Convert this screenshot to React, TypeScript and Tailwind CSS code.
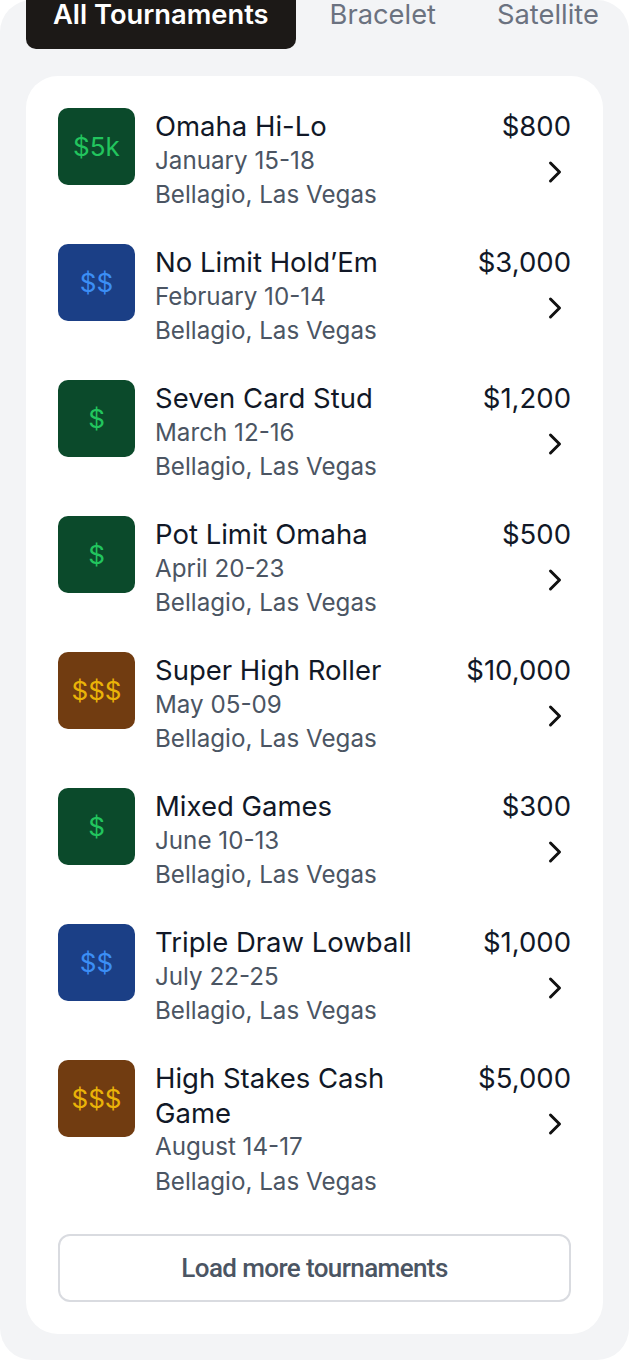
import { ChevronRight } from 'lucide-react'

type Tier = 'green' | 'blue' | 'gold'

interface Tournament {
  badge: string
  tier: Tier
  name: string
  dates: string
  venue: string
  buyIn: string
}

// ─── Data ─────────────────────────────────────────────────────────────────────

const TABS = ['All Tournaments', 'Bracelet', 'Satellite']

const TIER_STYLE: Record<Tier, string> = {
  green: 'bg-[#0b4a2b] text-[#22c55e]',
  blue: 'bg-[#1b3f86] text-[#3b8ef5]',
  gold: 'bg-[#713c11] text-[#eab308]',
}

const TOURNAMENTS: Tournament[] = [
  { badge: '$5k', tier: 'green', name: 'Omaha Hi-Lo', dates: 'January 15-18', venue: 'Bellagio, Las Vegas', buyIn: '$800' },
  { badge: '$$', tier: 'blue', name: 'No Limit Hold’Em', dates: 'February 10-14', venue: 'Bellagio, Las Vegas', buyIn: '$3,000' },
  { badge: '$', tier: 'green', name: 'Seven Card Stud', dates: 'March 12-16', venue: 'Bellagio, Las Vegas', buyIn: '$1,200' },
  { badge: '$', tier: 'green', name: 'Pot Limit Omaha', dates: 'April 20-23', venue: 'Bellagio, Las Vegas', buyIn: '$500' },
  { badge: '$$$', tier: 'gold', name: 'Super High Roller', dates: 'May 05-09', venue: 'Bellagio, Las Vegas', buyIn: '$10,000' },
  { badge: '$', tier: 'green', name: 'Mixed Games', dates: 'June 10-13', venue: 'Bellagio, Las Vegas', buyIn: '$300' },
  { badge: '$$', tier: 'blue', name: 'Triple Draw Lowball', dates: 'July 22-25', venue: 'Bellagio, Las Vegas', buyIn: '$1,000' },
  { badge: '$$$', tier: 'gold', name: 'High Stakes Cash Game', dates: 'August 14-17', venue: 'Bellagio, Las Vegas', buyIn: '$5,000' },
]

// ─── Component ────────────────────────────────────────────────────────────────

function TournamentRow({ t }: { t: Tournament }) {
  return (
    <div className="flex items-start gap-[20px]">
      <div
        className={`w-[77px] h-[77px] shrink-0 rounded-[10px] flex items-center justify-center text-[26px] ${TIER_STYLE[t.tier]}`}
      >
        {t.badge}
      </div>
      <div className="flex-1 min-w-0 mt-px">
        <div className="text-[27.5px] leading-[34.5px] text-[#111827]">{t.name}</div>
        <div className="text-[24.2px] leading-[34.5px] text-[#4b5563]">{t.dates}</div>
        <div className="text-[24.2px] leading-[34.5px] text-[#4b5563]">{t.venue}</div>
      </div>
      <div className="flex flex-col items-end mt-px">
        <div className="text-[27.5px] leading-[34px] text-[#111827]">{t.buyIn}</div>
        <ChevronRight size={36} strokeWidth={2} className="mt-[11px] -mr-[2px] text-[#111111]" />
      </div>
    </div>
  )
}

export default function App() {
  return (
    <div className="w-[629px] h-[1360px] bg-white" style={{ fontFamily: 'Inter, "Noto Sans", sans-serif' }}>
      <div className="h-full bg-[#f3f4f6] rounded-[32px] flex flex-col">
        {/* Tabs */}
        <div className="flex gap-[7px] pl-[26px] text-[27.3px] leading-[27px] font-semibold">
          {TABS.map((tab, i) => (
            <div
              key={tab}
              className={`-mt-[20px] h-[69px] px-[27px] pt-[21px] whitespace-nowrap ${
                i === 0 ? 'bg-[#1c1917] text-white rounded-[10px]' : 'text-[#6b7280] font-normal'
              }`}
            >
              {tab}
            </div>
          ))}
        </div>

        {/* List card */}
        <div className="mx-[26px] mt-[27px] bg-white rounded-[32px] p-[32px]">
          <div className="flex flex-col gap-[31.5px]">
            {TOURNAMENTS.map((t) => (
              <TournamentRow key={t.name} t={t} />
            ))}
          </div>
          <button
            className="mt-[35px] w-full h-[68px] rounded-[12px] border-2 border-[#d9dbe0] text-[26px] tracking-[-0.6px] font-medium text-[#4b5563]"
            style={{ fontFamily: 'Roboto, "Liberation Sans", sans-serif' }}
          >
            Load more tournaments
          </button>
        </div>
      </div>
    </div>
  )
}
